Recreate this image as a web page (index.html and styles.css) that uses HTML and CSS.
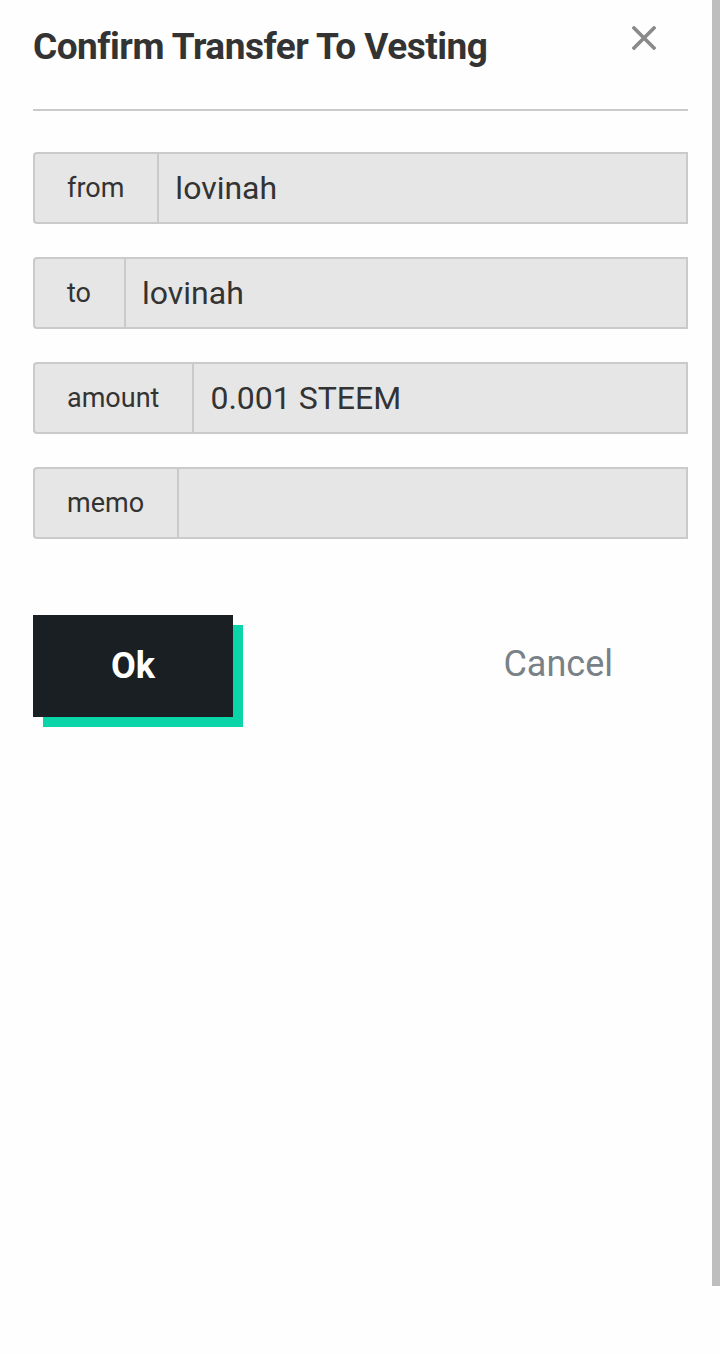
FILE: index.html
```html
<!doctype html>
<html>

<head>
  <title>Confirm Transfer To Vesting</title>
  <link rel="stylesheet" href="styles.css">
</head>

<body>
  <div class="modal">
    <div class="modal-header">
      <h2>Confirm Transfer To Vesting</h2>
      <button type="button" class="close-button" aria-label="Close">
        <svg width="24" height="24" viewBox="0 0 24 24">
          <path d="M2 2 L22 22 M22 2 L2 22" stroke="#8a8a8a" stroke-width="3.6" stroke-linecap="square" />
        </svg>
      </button>
    </div>
    <hr class="divider">

    <div class="input-group">
      <span class="input-group-label">from</span>
      <span class="input-group-field">lovinah</span>
    </div>
    <div class="input-group">
      <span class="input-group-label">to</span>
      <span class="input-group-field">lovinah</span>
    </div>
    <div class="input-group">
      <span class="input-group-label">amount</span>
      <span class="input-group-field">0.001 STEEM</span>
    </div>
    <div class="input-group">
      <span class="input-group-label">memo</span>
      <span class="input-group-field"></span>
    </div>

    <div class="buttons">
      <div class="ok-shadow">
        <button type="button" class="button-ok">Ok</button>
      </div>
      <button type="button" class="button-cancel">Cancel</button>
    </div>
  </div>
  <div class="scroll-thumb"></div>
</body>

</html>
```

FILE: styles.css
```css
body {
  font-family: Roboto, "Liberation Sans", sans-serif;
  margin: 0;
  background-color: #fefefe;
  color: #333;
}

.modal {
  padding: 0 32px 0 33px;
}

.modal-header {
  display: flex;
  justify-content: space-between;
  align-items: flex-start;
  height: 109px;
}

.modal-header h2 {
  margin: 0;
  padding-top: 25px;
  font-size: 37px;
  font-weight: 700;
  color: #333;
  letter-spacing: -0.5px;
}

.close-button {
  border: none;
  background: none;
  padding: 0;
  margin: 26px 32px 0 0;
  width: 24px;
  height: 24px;
  cursor: pointer;
}

.divider {
  border: none;
  border-top: 2px solid #cacaca;
  margin: 0 0 41px 0;
}

.input-group {
  display: flex;
  height: 72px;
  margin-bottom: 33px;
}

.input-group-label {
  display: flex;
  align-items: center;
  padding: 0 33px 0 32px;
  border: 2px solid #cacaca;
  border-right: none;
  border-radius: 4px 0 0 4px;
  background-color: #e6e6e6;
  font-size: 27px;
  color: #333;
}

.input-group-field {
  flex-grow: 1;
  display: flex;
  align-items: center;
  padding: 0 16px;
  border: 2px solid #cacaca;
  background-color: #e6e6e6;
  font-size: 32px;
  color: #333;
}

.buttons {
  display: flex;
  align-items: flex-start;
  margin-top: 76px;
}

.ok-shadow {
  margin: 10px 0 0 10px;
  background-color: #0ad5a9;
}

.button-ok {
  display: block;
  width: 200px;
  height: 102px;
  border: none;
  border-radius: 0;
  background-color: #1a1f24;
  transform: translate(-10px, -10px);
  color: #fff;
  font-family: Roboto, "Liberation Sans", sans-serif;
  font-size: 36px;
  font-weight: 700;
  cursor: pointer;
}

.button-cancel {
  margin: 28px 75px 0 auto;
  border: none;
  background: none;
  padding: 0;
  color: #788187;
  font-family: Roboto, "Liberation Sans", sans-serif;
  font-size: 36px;
  cursor: pointer;
}

.scroll-thumb {
  position: fixed;
  top: 0;
  right: 0;
  width: 8px;
  height: 1286px;
  background-color: #bebebe;
}
```
